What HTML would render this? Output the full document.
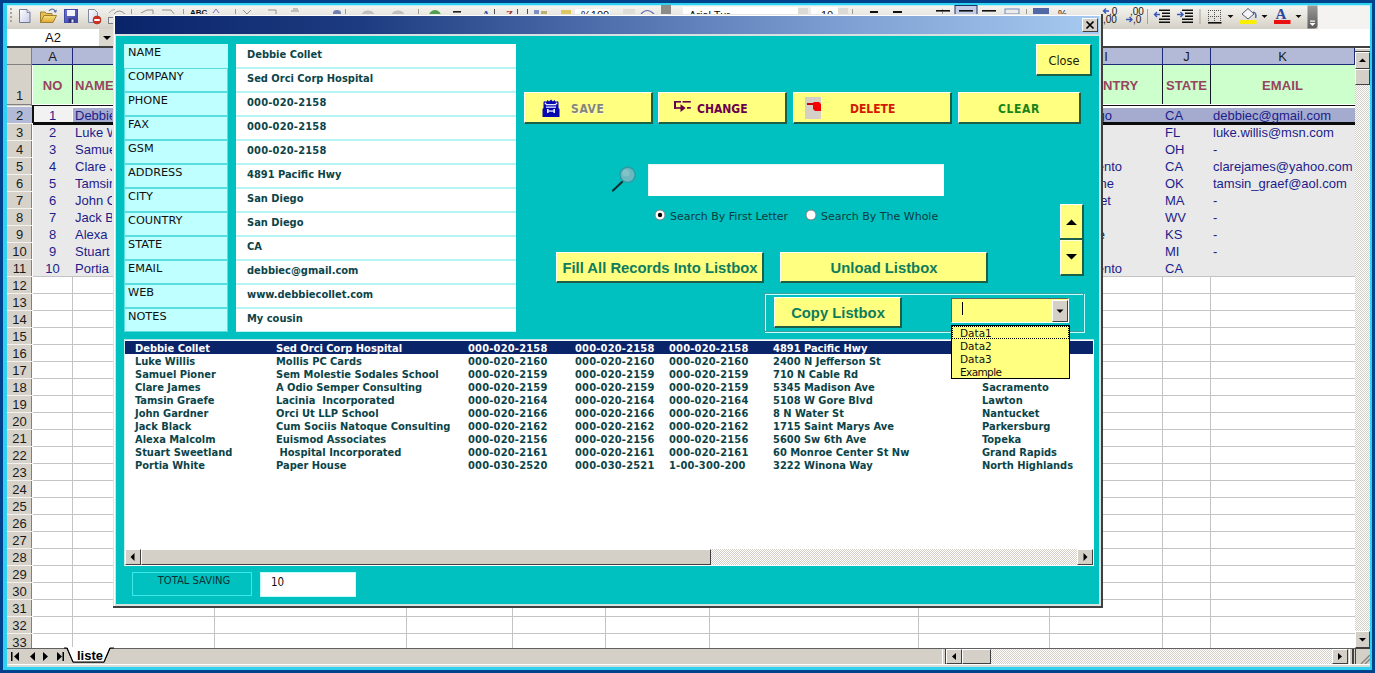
<!DOCTYPE html><html><head><meta charset="utf-8"><title>Address Book UserForm</title><style>
html,body{margin:0;padding:0;}
body{width:1375px;height:673px;overflow:hidden;position:relative;background:#00438c;font-family:"Liberation Sans",sans-serif;}
div,span,svg{position:absolute;box-sizing:border-box;}
.t{white-space:nowrap;line-height:1;}
.ar{font-family:"Liberation Sans",sans-serif;}
.th{font-family:"DejaVu Sans","Liberation Sans",sans-serif;}
.thb{font-family:"DejaVu Sans Condensed","DejaVu Sans","Liberation Sans",sans-serif;font-stretch:condensed;font-weight:bold;}
.cell{font-size:13px;color:#1c1c8a;white-space:nowrap;line-height:17px;height:17px;}
.rh{font-size:13px;color:#1a1a1a;text-align:center;left:7px;width:25px;line-height:17px;height:17px;white-space:nowrap;}
.btn{background:#ffff80;border-top:1px solid #ffffff;border-left:1px solid #ffffff;border-right:2px solid #1a6048;border-bottom:2px solid #1a6048;}
.lbl{left:124px;width:104px;height:24px;background:#c0ffff;border:1px solid #58e0e0;}
.lblt{left:128px;font-size:11.3px;color:#101010;}
.inp{left:236px;width:280px;height:24px;background:#ffffff;border:1px solid #b8f4f4;}
.inpt{left:247px;font-size:11px;color:#0b4448;}
.lb{font-size:11px;color:#0b4448;line-height:15px;height:13px;white-space:nowrap;}
</style></head><body>
<div style="left:3px;top:3px;width:1369px;height:667px;background:#30d0f0;"></div>
<div style="left:7px;top:5px;width:1363px;height:662px;background:#ffffff;"></div>
<div style="left:7px;top:5px;width:1363px;height:24px;background:linear-gradient(#f5f4f0,#e8e6df 45%,#d3cfc5);"></div>
<div style="left:1318px;top:5px;width:52px;height:24px;background:#f5f3f1;"></div>
<div style="left:7px;top:5px;width:1363px;height:1px;background:#b8f0f8;"></div>
<div style="left:7px;top:29px;width:1363px;height:17px;background:#ffffff;"></div>
<div style="left:99px;top:29px;width:15px;height:17px;background:#dcd8d0;"></div>
<div style="left:7px;top:46px;width:1363px;height:2px;background:#404040;"></div>
<svg width="110" height="24" style="left:7px;top:5px" shape-rendering="auto"><defs><linearGradient id="gdoc" x1="0" y1="0" x2="1" y2="1"><stop offset="0" stop-color="#ffffff"/><stop offset="1" stop-color="#c8cce8"/></linearGradient><linearGradient id="gfold" x1="0" y1="0" x2="0" y2="1"><stop offset="0" stop-color="#f8e080"/><stop offset="1" stop-color="#e0a830"/></linearGradient><linearGradient id="gsave" x1="0" y1="0" x2="1" y2="1"><stop offset="0" stop-color="#7078d0"/><stop offset="1" stop-color="#3840a0"/></linearGradient></defs><g fill="#a8a498"><rect x="3" y="3" width="2" height="2"/><rect x="3" y="7" width="2" height="2"/><rect x="3" y="11" width="2" height="2"/><rect x="3" y="15" width="2" height="2"/></g><path d="M12.5 4.5 L20 4.5 L23 7.5 L23 17.5 L12.5 17.5 Z" fill="url(#gdoc)" stroke="#707898" stroke-width="1"/><path d="M20 4.5 L20 7.5 L23 7.5" fill="#e8e8f4" stroke="#707898" stroke-width="0.8"/><path d="M33.5 17.5 L33.5 7 L38 7 L39.5 8.5 L45 8.5 L45 11" fill="#e8c050" stroke="#a08030" stroke-width="1"/><path d="M33.5 17.5 L37 10.5 L49.5 10.5 L46 17.5 Z" fill="url(#gfold)" stroke="#a08030" stroke-width="1"/><path d="M42 6 C44 3.5 47 3.5 48.5 6.5" fill="none" stroke="#6078a8" stroke-width="1.2"/><path d="M50 4.5 L49 8 L46.5 6.5 Z" fill="#6078a8"/><rect x="57.5" y="4.5" width="13" height="13" fill="url(#gsave)" stroke="#4048a8" stroke-width="1"/><rect x="60" y="5" width="8" height="6" fill="#f4f4fc"/><rect x="61.5" y="13.5" width="6" height="4" fill="#30307a"/><rect x="64.5" y="14.5" width="2" height="3" fill="#e8e8f8"/><path d="M81.500 4.500 L87.5 4.500 L90.5 7.5 L90.5 17.5 L81.5 17.5 Z" fill="url(#gdoc)" stroke="#8088a0" stroke-width="1"/><circle cx="90" cy="15" r="4" fill="#d03020" stroke="#a02818" stroke-width="0.6"/><rect x="87.3" y="14" width="5.4" height="2" fill="#ffffff"/><rect x="101.5" y="12.5" width="6" height="6" fill="#e8e8e8" stroke="#808080" stroke-width="1"/><path d="M102 8 Q104 4.5 108 4.5" fill="none" stroke="#b0b0b0" stroke-width="1"/></svg>
<svg width="990" height="9" style="left:113px;top:5px"><g stroke="#a09c90" stroke-width="1"><path d="M18.5 4 V9 M70.500 4 V9 M122.5 4 V9 M232.5 4 V9 M305.500 4 V9 M739.500 4 V9 M829.5 4 V9 M913.5 4 V9"/></g><g fill="none" stroke="#909090" stroke-width="1"><path d="M1 9 Q6 3 12 9"/><path d="M28 8 L34 5 L40 5 L40 9"/><path d="M49 5 L58 5 L61 9"/><path d="M130 5 L134 9 L138 5"/><path d="M155 5 H163 V9"/><path d="M178 6 H186 M180 4 H185"/></g><ellipse cx="224" cy="8" rx="4" ry="3" fill="#7080b0"/><ellipse cx="255" cy="9" rx="6" ry="3.500" fill="#c0c0c0"/><ellipse cx="285" cy="9" rx="6" ry="3.500" fill="#c0c0c0"/><circle cx="322" cy="11" r="6" fill="#50a050"/><rect x="340" y="6" width="8" height="1.600" fill="#202020"/><text x="945" y="13" font-family="Liberation Sans, sans-serif" font-size="10" fill="#202020">%</text><rect x="462" y="4" width="35" height="5" fill="#ffffff"/><rect x="510" y="4" width="12" height="5" fill="#dedcd6"/><path d="M528 9 Q534 2 541 9" fill="none" stroke="#6070b0" stroke-width="1.2"/><rect x="548" y="0" width="10" height="9" fill="#8c8c8a"/><rect x="570" y="2" width="115" height="7" fill="#ffffff"/><rect x="685" y="3" width="10" height="6" fill="#dcdad4"/><rect x="698" y="2" width="27" height="7" fill="#ffffff"/><rect x="725" y="3" width="10" height="6" fill="#dcdad4"/><rect x="842" y="0.500" width="22" height="9" fill="#c2cce6" stroke="#20306a" stroke-width="1"/><g fill="#101010"><rect x="823" y="5" width="14" height="1.600"/><rect x="846" y="5" width="14" height="1.600"/><rect x="869" y="5" width="14" height="1.600"/><rect x="757" y="6" width="8" height="2"/><rect x="780" y="6" width="9" height="2"/></g><rect x="892" y="4" width="14" height="5" fill="none" stroke="#7088c0" stroke-width="1"/><rect x="920" y="3" width="16" height="6" fill="#5068a8"/><text x="77" y="9.500" font-family="Liberation Sans, sans-serif" font-size="8" font-weight="bold" fill="#101010">ABC</text><path d="M100 8 L103 4 L106 8" fill="none" stroke="#8070c0" stroke-width="1"/><text x="369" y="13" font-family="Liberation Serif, serif" font-size="11" font-weight="bold" fill="#3050a0">A</text><text x="393" y="13" font-family="Liberation Serif, serif" font-size="11" font-weight="bold" fill="#a03030">Z</text><rect x="421" y="5" width="5" height="4" fill="#8090c0"/><rect x="428" y="6" width="6" height="3" fill="#c0b070"/><rect x="448" y="5" width="10" height="4" fill="#e0c860"/><path d="M381.500 4 V9 M404.500 4 V9 M414.500 4 V9" stroke="#505050" stroke-width="1"/><text x="468" y="14" font-family="Liberation Sans, sans-serif" font-size="11" fill="#101010">%100</text><text x="576" y="14" font-family="Liberation Sans, sans-serif" font-size="11" fill="#101010">Arial Tur</text><text x="708" y="14" font-family="Liberation Sans, sans-serif" font-size="11" fill="#101010">10</text></svg>
<svg width="230" height="24" style="left:1100px;top:5px"><defs><linearGradient id="gcap" x1="0" y1="0" x2="0" y2="1"><stop offset="0" stop-color="#9a9a98"/><stop offset="1" stop-color="#5c5c5c"/></linearGradient></defs><g font-family="Liberation Sans, sans-serif" font-size="10" fill="#181818"><text x="9" y="10">,0</text><text x="3" y="18">,00</text><text x="30" y="10">,00</text><text x="33" y="18">,0</text></g><g stroke="#3858b8" stroke-width="1.400" fill="none"><path d="M3.500 6 H9 M6 3.500 L3.500 6 L6 8.500"/><path d="M26 14.500 H32 M29.500 12 L32 14.500 L29.500 17"/></g><rect x="47" y="4" width="1" height="15" fill="#a8a498"/><rect x="99.500" y="4" width="1" height="15" fill="#a8a498"/><g fill="#101010"><rect x="59" y="4.500" width="11" height="1.500"/><rect x="62" y="7.500" width="8" height="1.500"/><rect x="62" y="10.500" width="8" height="1.500"/><rect x="59" y="13.500" width="11" height="1.500"/><rect x="59" y="16.500" width="11" height="1.500"/><rect x="82" y="4.500" width="11" height="1.500"/><rect x="85" y="7.500" width="8" height="1.500"/><rect x="85" y="10.500" width="8" height="1.500"/><rect x="82" y="13.500" width="11" height="1.500"/><rect x="82" y="16.500" width="11" height="1.500"/></g><g stroke="#3858b8" stroke-width="1.400" fill="none"><path d="M54.500 9.500 H60 M57 7 L54.500 9.500 L57 12"/><path d="M77 9.500 H83 M80.500 7 L83 9.500 L80.500 12"/></g><g stroke="#505050" stroke-width="1" stroke-dasharray="1 1" fill="none"><path d="M108.500 5 V17 M114.500 5 V17 M120.500 5 V17 M108 5.500 H121 M108 11.500 H121"/></g><rect x="108" y="17" width="13.500" height="1.600" fill="#101010"/><path d="M127.500 10 H133.500 L130.500 13 Z M161.500 10 H167.500 L164.500 13 Z M195.500 10 H201.500 L198.500 13 Z" fill="#101010"/><path d="M142 9 L148 3.500 L154 9 L148 14 Z" fill="#f4f4fa" stroke="#505868" stroke-width="1"/><path d="M153 7 Q157 8 155.500 13" fill="none" stroke="#4868b8" stroke-width="1.600"/><rect x="140" y="15" width="16.500" height="4" fill="#f8f000"/><text x="175.500" y="14" font-family="Liberation Serif, serif" font-weight="bold" font-size="15" fill="#2848a0">A</text><rect x="174" y="15" width="16.500" height="4" fill="#e81010"/><path d="M207.500 0.500 H217.500 V20 Q217.500 23.500 214 23.500 H207.500 Z" fill="url(#gcap)"/><rect x="210" y="15.500" width="5" height="1.200" fill="#ffffff"/><path d="M209.500 18 H215.500 L212.500 21 Z" fill="#ffffff"/></svg>
<div class="t ar" style="left:7px;top:29px;width:92px;height:17px;font-size:13px;color:#101010;text-align:center;line-height:17px;">A2</div>
<svg width="15" height="17" style="left:99px;top:29px"><path d="M4 7 H12 L8 11 Z" fill="#000"/></svg>
<div style="left:7px;top:48px;width:1348px;height:600px;background:#ffffff;"></div>
<div style="left:7px;top:48px;width:1348px;height:17px;background:#b3bad7;border-bottom:1px solid #1c2a78;"></div>
<div style="left:7px;top:48px;width:25px;height:17px;background:#d4d0c8;border-right:1px solid #808080;border-bottom:1px solid #808080;"></div>
<div class="t" style="left:33px;top:48px;width:39px;height:16px;font-size:13px;color:#1a1a1a;text-align:center;line-height:17px;">A</div>
<div style="left:72px;top:48px;width:1px;height:17px;background:#1c2a78;"></div>
<div class="t" style="left:73px;top:48px;width:141px;height:16px;font-size:13px;color:#1a1a1a;text-align:center;line-height:17px;">B</div>
<div style="left:214px;top:48px;width:1px;height:17px;background:#1c2a78;"></div>
<div class="t" style="left:215px;top:48px;width:191px;height:16px;font-size:13px;color:#1a1a1a;text-align:center;line-height:17px;">C</div>
<div style="left:406px;top:48px;width:1px;height:17px;background:#1c2a78;"></div>
<div class="t" style="left:407px;top:48px;width:105px;height:16px;font-size:13px;color:#1a1a1a;text-align:center;line-height:17px;">D</div>
<div style="left:512px;top:48px;width:1px;height:17px;background:#1c2a78;"></div>
<div class="t" style="left:513px;top:48px;width:92px;height:16px;font-size:13px;color:#1a1a1a;text-align:center;line-height:17px;">E</div>
<div style="left:605px;top:48px;width:1px;height:17px;background:#1c2a78;"></div>
<div class="t" style="left:606px;top:48px;width:103px;height:16px;font-size:13px;color:#1a1a1a;text-align:center;line-height:17px;">F</div>
<div style="left:709px;top:48px;width:1px;height:17px;background:#1c2a78;"></div>
<div class="t" style="left:710px;top:48px;width:208px;height:16px;font-size:13px;color:#1a1a1a;text-align:center;line-height:17px;">G</div>
<div style="left:918px;top:48px;width:1px;height:17px;background:#1c2a78;"></div>
<div class="t" style="left:919px;top:48px;width:130px;height:16px;font-size:13px;color:#1a1a1a;text-align:center;line-height:17px;">H</div>
<div style="left:1049px;top:48px;width:1px;height:17px;background:#1c2a78;"></div>
<div class="t" style="left:1050px;top:48px;width:112px;height:16px;font-size:13px;color:#1a1a1a;text-align:center;line-height:17px;">I</div>
<div style="left:1162px;top:48px;width:1px;height:17px;background:#1c2a78;"></div>
<div class="t" style="left:1163px;top:48px;width:47px;height:16px;font-size:13px;color:#1a1a1a;text-align:center;line-height:17px;">J</div>
<div style="left:1210px;top:48px;width:1px;height:17px;background:#1c2a78;"></div>
<div class="t" style="left:1211px;top:48px;width:143px;height:16px;font-size:13px;color:#1a1a1a;text-align:center;line-height:17px;">K</div>
<div style="left:1354px;top:48px;width:1px;height:17px;background:#1c2a78;"></div>
<div style="left:33px;top:65px;width:1322px;height:39px;background:#ccffcc;"></div>
<div style="left:72px;top:65px;width:1px;height:39px;background:#101820;"></div>
<div style="left:214px;top:65px;width:1px;height:39px;background:#101820;"></div>
<div style="left:406px;top:65px;width:1px;height:39px;background:#101820;"></div>
<div style="left:512px;top:65px;width:1px;height:39px;background:#101820;"></div>
<div style="left:605px;top:65px;width:1px;height:39px;background:#101820;"></div>
<div style="left:709px;top:65px;width:1px;height:39px;background:#101820;"></div>
<div style="left:918px;top:65px;width:1px;height:39px;background:#101820;"></div>
<div style="left:1049px;top:65px;width:1px;height:39px;background:#101820;"></div>
<div style="left:1162px;top:65px;width:1px;height:39px;background:#101820;"></div>
<div style="left:1210px;top:65px;width:1px;height:39px;background:#101820;"></div>
<div class="t" style="left:33px;top:65px;width:39px;height:39px;font-size:13px;font-weight:bold;color:#96445f;text-align:center;line-height:41px;letter-spacing:0.1px;">NO</div>
<div class="t" style="left:75px;top:65px;width:100px;height:39px;font-size:13px;font-weight:bold;color:#96445f;line-height:41px;letter-spacing:0.1px;">NAME</div>
<div class="t" style="left:215px;top:65px;width:191px;height:39px;font-size:13px;font-weight:bold;color:#96445f;text-align:center;line-height:41px;letter-spacing:0.1px;">COMPANY</div>
<div class="t" style="left:407px;top:65px;width:105px;height:39px;font-size:13px;font-weight:bold;color:#96445f;text-align:center;line-height:41px;letter-spacing:0.1px;">PHONE</div>
<div class="t" style="left:513px;top:65px;width:92px;height:39px;font-size:13px;font-weight:bold;color:#96445f;text-align:center;line-height:41px;letter-spacing:0.1px;">FAX</div>
<div class="t" style="left:606px;top:65px;width:103px;height:39px;font-size:13px;font-weight:bold;color:#96445f;text-align:center;line-height:41px;letter-spacing:0.1px;">GSM</div>
<div class="t" style="left:710px;top:65px;width:208px;height:39px;font-size:13px;font-weight:bold;color:#96445f;text-align:center;line-height:41px;letter-spacing:0.1px;">ADDRESS</div>
<div class="t" style="left:919px;top:65px;width:130px;height:39px;font-size:13px;font-weight:bold;color:#96445f;text-align:center;line-height:41px;letter-spacing:0.1px;">CITY</div>
<div class="t" style="left:1050px;top:65px;width:112px;height:39px;font-size:13px;font-weight:bold;color:#96445f;text-align:center;line-height:41px;letter-spacing:0.1px;">COUNTRY</div>
<div class="t" style="left:1163px;top:65px;width:47px;height:39px;font-size:13px;font-weight:bold;color:#96445f;text-align:center;line-height:41px;letter-spacing:0.1px;">STATE</div>
<div class="t" style="left:1211px;top:65px;width:143px;height:39px;font-size:13px;font-weight:bold;color:#96445f;text-align:center;line-height:41px;letter-spacing:0.1px;">EMAIL</div>
<div style="left:33px;top:106px;width:1322px;height:171px;background:#e9e9e9;"></div>
<div style="left:33px;top:276px;width:1322px;height:1px;background:#c4c4c4;"></div>
<div style="left:33px;top:293px;width:1322px;height:1px;background:#c4c4c4;"></div>
<div style="left:33px;top:310px;width:1322px;height:1px;background:#c4c4c4;"></div>
<div style="left:33px;top:327px;width:1322px;height:1px;background:#c4c4c4;"></div>
<div style="left:33px;top:344px;width:1322px;height:1px;background:#c4c4c4;"></div>
<div style="left:33px;top:361px;width:1322px;height:1px;background:#c4c4c4;"></div>
<div style="left:33px;top:378px;width:1322px;height:1px;background:#c4c4c4;"></div>
<div style="left:33px;top:395px;width:1322px;height:1px;background:#c4c4c4;"></div>
<div style="left:33px;top:412px;width:1322px;height:1px;background:#c4c4c4;"></div>
<div style="left:33px;top:429px;width:1322px;height:1px;background:#c4c4c4;"></div>
<div style="left:33px;top:446px;width:1322px;height:1px;background:#c4c4c4;"></div>
<div style="left:33px;top:463px;width:1322px;height:1px;background:#c4c4c4;"></div>
<div style="left:33px;top:480px;width:1322px;height:1px;background:#c4c4c4;"></div>
<div style="left:33px;top:497px;width:1322px;height:1px;background:#c4c4c4;"></div>
<div style="left:33px;top:514px;width:1322px;height:1px;background:#c4c4c4;"></div>
<div style="left:33px;top:531px;width:1322px;height:1px;background:#c4c4c4;"></div>
<div style="left:33px;top:548px;width:1322px;height:1px;background:#c4c4c4;"></div>
<div style="left:33px;top:565px;width:1322px;height:1px;background:#c4c4c4;"></div>
<div style="left:33px;top:582px;width:1322px;height:1px;background:#c4c4c4;"></div>
<div style="left:33px;top:599px;width:1322px;height:1px;background:#c4c4c4;"></div>
<div style="left:33px;top:616px;width:1322px;height:1px;background:#c4c4c4;"></div>
<div style="left:33px;top:633px;width:1322px;height:1px;background:#c4c4c4;"></div>
<div style="left:72px;top:277px;width:1px;height:371px;background:#c4c4c4;"></div>
<div style="left:214px;top:277px;width:1px;height:371px;background:#c4c4c4;"></div>
<div style="left:406px;top:277px;width:1px;height:371px;background:#c4c4c4;"></div>
<div style="left:512px;top:277px;width:1px;height:371px;background:#c4c4c4;"></div>
<div style="left:605px;top:277px;width:1px;height:371px;background:#c4c4c4;"></div>
<div style="left:709px;top:277px;width:1px;height:371px;background:#c4c4c4;"></div>
<div style="left:918px;top:277px;width:1px;height:371px;background:#c4c4c4;"></div>
<div style="left:1049px;top:277px;width:1px;height:371px;background:#c4c4c4;"></div>
<div style="left:1162px;top:277px;width:1px;height:371px;background:#c4c4c4;"></div>
<div style="left:1210px;top:277px;width:1px;height:371px;background:#c4c4c4;"></div>
<div style="left:7px;top:65px;width:25px;height:583px;background:#d6d2ca;border-right:1px solid #808080;"></div>
<div style="left:7px;top:65px;width:25px;height:40px;border-bottom:1px solid #808080;"></div>
<div class="t" style="left:7px;top:65px;width:25px;height:39px;font-size:13px;color:#1a1a1a;text-align:center;line-height:62px;">1</div>
<div style="left:7px;top:106px;width:25px;height:18px;background:#b3bad7;border-bottom:1px solid #808080;border-top:1px solid #f4f2ee;"></div>
<div class="rh ar" style="top:107px;">2</div>
<div style="left:7px;top:123px;width:25px;height:18px;border-bottom:1px solid #808080;border-top:1px solid #f4f2ee;"></div>
<div class="rh ar" style="top:124px;">3</div>
<div style="left:7px;top:140px;width:25px;height:18px;border-bottom:1px solid #808080;border-top:1px solid #f4f2ee;"></div>
<div class="rh ar" style="top:141px;">4</div>
<div style="left:7px;top:157px;width:25px;height:18px;border-bottom:1px solid #808080;border-top:1px solid #f4f2ee;"></div>
<div class="rh ar" style="top:158px;">5</div>
<div style="left:7px;top:174px;width:25px;height:18px;border-bottom:1px solid #808080;border-top:1px solid #f4f2ee;"></div>
<div class="rh ar" style="top:175px;">6</div>
<div style="left:7px;top:191px;width:25px;height:18px;border-bottom:1px solid #808080;border-top:1px solid #f4f2ee;"></div>
<div class="rh ar" style="top:192px;">7</div>
<div style="left:7px;top:208px;width:25px;height:18px;border-bottom:1px solid #808080;border-top:1px solid #f4f2ee;"></div>
<div class="rh ar" style="top:209px;">8</div>
<div style="left:7px;top:225px;width:25px;height:18px;border-bottom:1px solid #808080;border-top:1px solid #f4f2ee;"></div>
<div class="rh ar" style="top:226px;">9</div>
<div style="left:7px;top:242px;width:25px;height:18px;border-bottom:1px solid #808080;border-top:1px solid #f4f2ee;"></div>
<div class="rh ar" style="top:243px;">10</div>
<div style="left:7px;top:259px;width:25px;height:18px;border-bottom:1px solid #808080;border-top:1px solid #f4f2ee;"></div>
<div class="rh ar" style="top:260px;">11</div>
<div style="left:7px;top:276px;width:25px;height:18px;border-bottom:1px solid #808080;border-top:1px solid #f4f2ee;"></div>
<div class="rh ar" style="top:277px;">12</div>
<div style="left:7px;top:293px;width:25px;height:18px;border-bottom:1px solid #808080;border-top:1px solid #f4f2ee;"></div>
<div class="rh ar" style="top:294px;">13</div>
<div style="left:7px;top:310px;width:25px;height:18px;border-bottom:1px solid #808080;border-top:1px solid #f4f2ee;"></div>
<div class="rh ar" style="top:311px;">14</div>
<div style="left:7px;top:327px;width:25px;height:18px;border-bottom:1px solid #808080;border-top:1px solid #f4f2ee;"></div>
<div class="rh ar" style="top:328px;">15</div>
<div style="left:7px;top:344px;width:25px;height:18px;border-bottom:1px solid #808080;border-top:1px solid #f4f2ee;"></div>
<div class="rh ar" style="top:345px;">16</div>
<div style="left:7px;top:361px;width:25px;height:18px;border-bottom:1px solid #808080;border-top:1px solid #f4f2ee;"></div>
<div class="rh ar" style="top:362px;">17</div>
<div style="left:7px;top:378px;width:25px;height:18px;border-bottom:1px solid #808080;border-top:1px solid #f4f2ee;"></div>
<div class="rh ar" style="top:379px;">18</div>
<div style="left:7px;top:395px;width:25px;height:18px;border-bottom:1px solid #808080;border-top:1px solid #f4f2ee;"></div>
<div class="rh ar" style="top:396px;">19</div>
<div style="left:7px;top:412px;width:25px;height:18px;border-bottom:1px solid #808080;border-top:1px solid #f4f2ee;"></div>
<div class="rh ar" style="top:413px;">20</div>
<div style="left:7px;top:429px;width:25px;height:18px;border-bottom:1px solid #808080;border-top:1px solid #f4f2ee;"></div>
<div class="rh ar" style="top:430px;">21</div>
<div style="left:7px;top:446px;width:25px;height:18px;border-bottom:1px solid #808080;border-top:1px solid #f4f2ee;"></div>
<div class="rh ar" style="top:447px;">22</div>
<div style="left:7px;top:463px;width:25px;height:18px;border-bottom:1px solid #808080;border-top:1px solid #f4f2ee;"></div>
<div class="rh ar" style="top:464px;">23</div>
<div style="left:7px;top:480px;width:25px;height:18px;border-bottom:1px solid #808080;border-top:1px solid #f4f2ee;"></div>
<div class="rh ar" style="top:481px;">24</div>
<div style="left:7px;top:497px;width:25px;height:18px;border-bottom:1px solid #808080;border-top:1px solid #f4f2ee;"></div>
<div class="rh ar" style="top:498px;">25</div>
<div style="left:7px;top:514px;width:25px;height:18px;border-bottom:1px solid #808080;border-top:1px solid #f4f2ee;"></div>
<div class="rh ar" style="top:515px;">26</div>
<div style="left:7px;top:531px;width:25px;height:18px;border-bottom:1px solid #808080;border-top:1px solid #f4f2ee;"></div>
<div class="rh ar" style="top:532px;">27</div>
<div style="left:7px;top:548px;width:25px;height:18px;border-bottom:1px solid #808080;border-top:1px solid #f4f2ee;"></div>
<div class="rh ar" style="top:549px;">28</div>
<div style="left:7px;top:565px;width:25px;height:18px;border-bottom:1px solid #808080;border-top:1px solid #f4f2ee;"></div>
<div class="rh ar" style="top:566px;">29</div>
<div style="left:7px;top:582px;width:25px;height:18px;border-bottom:1px solid #808080;border-top:1px solid #f4f2ee;"></div>
<div class="rh ar" style="top:583px;">30</div>
<div style="left:7px;top:599px;width:25px;height:18px;border-bottom:1px solid #808080;border-top:1px solid #f4f2ee;"></div>
<div class="rh ar" style="top:600px;">31</div>
<div style="left:7px;top:616px;width:25px;height:18px;border-bottom:1px solid #808080;border-top:1px solid #f4f2ee;"></div>
<div class="rh ar" style="top:617px;">32</div>
<div style="left:7px;top:633px;width:25px;height:18px;border-bottom:1px solid #808080;border-top:1px solid #f4f2ee;"></div>
<div class="rh ar" style="top:634px;">33</div>
<div style="left:33px;top:104px;width:1322px;height:2px;background:#ffffff;"></div>
<div style="left:33px;top:105px;width:1322px;height:1px;background:#101010;"></div>
<div style="left:33px;top:106px;width:1322px;height:16px;background:#ffffff;"></div>
<div style="left:73px;top:108px;width:1282px;height:14px;background:#a4abce;"></div>
<div style="left:33px;top:106px;width:39px;height:16px;background:#f2f2f2;"></div>
<div style="left:32px;top:105px;width:2px;height:18px;background:#101010;"></div>
<div style="left:33px;top:122px;width:1322px;height:3px;background:#0a0a0a;"></div>
<div class="cell ar" style="left:33px;width:39px;text-align:center;top:107px;">1</div>
<div class="cell ar" style="left:75px;top:107px;width:37px;overflow:hidden;">Debbie Collet</div>
<div class="cell ar" style="right:263px;top:107px;">San Diego</div>
<div class="cell ar" style="left:1165px;top:107px;">CA</div>
<div class="cell ar" style="left:1213px;top:107px;">debbiec@gmail.com</div>
<div class="cell ar" style="left:33px;width:39px;text-align:center;top:124px;">2</div>
<div class="cell ar" style="left:75px;top:124px;width:37px;overflow:hidden;">Luke Willis</div>
<div class="cell ar" style="left:1165px;top:124px;">FL</div>
<div class="cell ar" style="left:1213px;top:124px;">luke.willis@msn.com</div>
<div class="cell ar" style="left:33px;width:39px;text-align:center;top:141px;">3</div>
<div class="cell ar" style="left:75px;top:141px;width:37px;overflow:hidden;">Samuel Pioner</div>
<div class="cell ar" style="left:1165px;top:141px;">OH</div>
<div class="cell ar" style="left:1213px;top:141px;">-</div>
<div class="cell ar" style="left:33px;width:39px;text-align:center;top:158px;">4</div>
<div class="cell ar" style="left:75px;top:158px;width:37px;overflow:hidden;">Clare James</div>
<div class="cell ar" style="right:253px;top:158px;">Sacramento</div>
<div class="cell ar" style="left:1165px;top:158px;">CA</div>
<div class="cell ar" style="left:1213px;top:158px;">clarejames@yahoo.com</div>
<div class="cell ar" style="left:33px;width:39px;text-align:center;top:175px;">5</div>
<div class="cell ar" style="left:75px;top:175px;width:37px;overflow:hidden;">Tamsin Graefe</div>
<div class="cell ar" style="right:261px;top:175px;">Cheyenne</div>
<div class="cell ar" style="left:1165px;top:175px;">OK</div>
<div class="cell ar" style="left:1213px;top:175px;">tamsin_graef@aol.com</div>
<div class="cell ar" style="left:33px;width:39px;text-align:center;top:192px;">6</div>
<div class="cell ar" style="left:75px;top:192px;width:37px;overflow:hidden;">John Gardner</div>
<div class="cell ar" style="right:264px;top:192px;">Nantucket</div>
<div class="cell ar" style="left:1165px;top:192px;">MA</div>
<div class="cell ar" style="left:1213px;top:192px;">-</div>
<div class="cell ar" style="left:33px;width:39px;text-align:center;top:209px;">7</div>
<div class="cell ar" style="left:75px;top:209px;width:37px;overflow:hidden;">Jack Black</div>
<div class="cell ar" style="left:1165px;top:209px;">WV</div>
<div class="cell ar" style="left:1213px;top:209px;">-</div>
<div class="cell ar" style="left:33px;width:39px;text-align:center;top:226px;">8</div>
<div class="cell ar" style="left:75px;top:226px;width:37px;overflow:hidden;">Alexa Malcolm</div>
<div class="cell ar" style="right:270px;top:226px;">Louisville</div>
<div class="cell ar" style="left:1165px;top:226px;">KS</div>
<div class="cell ar" style="left:1213px;top:226px;">-</div>
<div class="cell ar" style="left:33px;width:39px;text-align:center;top:243px;">9</div>
<div class="cell ar" style="left:75px;top:243px;width:37px;overflow:hidden;">Stuart Sweetland</div>
<div class="cell ar" style="left:1165px;top:243px;">MI</div>
<div class="cell ar" style="left:1213px;top:243px;">-</div>
<div class="cell ar" style="left:33px;width:39px;text-align:center;top:260px;">10</div>
<div class="cell ar" style="left:75px;top:260px;width:37px;overflow:hidden;">Portia White</div>
<div class="cell ar" style="right:253px;top:260px;">Sacramento</div>
<div class="cell ar" style="left:1165px;top:260px;">CA</div>
<div style="left:1355px;top:48px;width:15px;height:600px;background-color:#ffffff;background-image:linear-gradient(45deg,#d4d0c8 25%,transparent 25%,transparent 75%,#d4d0c8 75%),linear-gradient(45deg,#d4d0c8 25%,transparent 25%,transparent 75%,#d4d0c8 75%);background-size:2px 2px;background-position:0 0,1px 1px;"></div>
<div style="left:1355px;top:48px;width:15px;height:4px;background:#d4d0c8;border-bottom:1px solid #404040;border-top:1px solid #fff;"></div>
<div style="left:1355px;top:52px;width:15px;height:17px;background:#d4d0c8;border-top:1px solid #ffffff;border-left:1px solid #ffffff;border-right:1px solid #404040;border-bottom:1px solid #404040;"><svg width="13" height="15" style="left:0;top:0"><path d="M3 9 L10 9 L6.5 5.5 Z" fill="#000"/></svg></div>
<div style="left:1355px;top:69px;width:15px;height:16px;background:#d4d0c8;border-top:1px solid #ffffff;border-left:1px solid #ffffff;border-right:1px solid #404040;border-bottom:1px solid #404040;"></div>
<div style="left:1355px;top:631px;width:15px;height:17px;background:#d4d0c8;border-top:1px solid #ffffff;border-left:1px solid #ffffff;border-right:1px solid #404040;border-bottom:1px solid #404040;"><svg width="13" height="15" style="left:0;top:0"><path d="M3 6 L10 6 L6.5 9.5 Z" fill="#000"/></svg></div>
<div style="left:7px;top:648px;width:1363px;height:16px;background:#d4d0c8;border-top:1px solid #606060;"></div>
<div style="left:7px;top:664px;width:1363px;height:1px;background:#ffffff;"></div>
<div style="left:7px;top:665px;width:1363px;height:2px;background:#d4dcd8;"></div>
<svg width="62" height="16" style="left:7px;top:648px"><g fill="#000"><rect x="4" y="4" width="1.5" height="9"/><path d="M12 4 L12 13 L7 8.5Z"/><path d="M28 4 L28 13 L23 8.5Z"/><path d="M36 4 L36 13 L41 8.5Z"/><path d="M50 4 L50 13 L55 8.5Z"/><rect x="55.5" y="4" width="1.5" height="9"/></g></svg>
<svg width="50" height="17" style="left:64px;top:647px"><path d="M0 1 L3 1 L9 15 L40 15 L46 1 L50 1" fill="none" stroke="#000" stroke-width="1"/><path d="M3 0 L9 15 L40 15 L46 0 Z" fill="#ffffff"/><path d="M3 1 L9 15 L40 15 L46 1" fill="none" stroke="#000" stroke-width="1.2"/></svg>
<div class="t ar" style="left:74px;top:648px;width:32px;height:15px;font-size:13px;font-weight:bold;color:#000;text-align:center;line-height:15px;">liste</div>
<div style="left:942px;top:649px;width:4px;height:15px;background:#d4d0c8;border-left:1px solid #fff;border-right:1px solid #404040;"></div>
<div style="left:946px;top:649px;width:402px;height:15px;background-color:#ffffff;background-image:linear-gradient(45deg,#d4d0c8 25%,transparent 25%,transparent 75%,#d4d0c8 75%),linear-gradient(45deg,#d4d0c8 25%,transparent 25%,transparent 75%,#d4d0c8 75%);background-size:2px 2px;background-position:0 0,1px 1px;"></div>
<div style="left:946px;top:649px;width:16px;height:15px;background:#d4d0c8;border-top:1px solid #ffffff;border-left:1px solid #ffffff;border-right:1px solid #404040;border-bottom:1px solid #404040;"><svg width="14" height="13" style="left:0;top:0"><path d="M9 3 L9 10 L5 6.5 Z" fill="#000"/></svg></div>
<div style="left:962px;top:649px;width:29px;height:15px;background:#d4d0c8;border-top:1px solid #ffffff;border-left:1px solid #ffffff;border-right:1px solid #404040;border-bottom:1px solid #404040;"></div>
<div style="left:1332px;top:649px;width:16px;height:15px;background:#d4d0c8;border-top:1px solid #ffffff;border-left:1px solid #ffffff;border-right:1px solid #404040;border-bottom:1px solid #404040;"><svg width="14" height="13" style="left:0;top:0"><path d="M5 3 L5 10 L9 6.5 Z" fill="#000"/></svg></div>
<div style="left:1349px;top:649px;width:5px;height:15px;background:#d4d0c8;border-left:1px solid #fff;border-right:2px solid #404040;"></div>
<div style="left:1355px;top:648px;width:15px;height:16px;background:#d4d0c8;border-top:1px solid #404040;border-left:1px solid #404040;"><svg width="14" height="15" style="left:0;top:0"><path d="M5 15 L14 6 M9 15 L14 10" stroke="#808080" stroke-width="1.3"/></svg></div>
<div style="left:113px;top:14px;width:990px;height:594px;background:#e6e6e4;border-right:2px solid #404040;border-bottom:2px solid #404040;"></div>
<div style="left:114px;top:15px;width:987px;height:591px;background:#d6e2e0;border-top:1px solid #ffffff;border-left:1px solid #ffffff;"></div>
<div style="left:115px;top:16px;width:984px;height:18px;background:linear-gradient(90deg,#0a246a 0%,#1d3b80 25%,#4f6fad 50%,#7fa1d4 75%,#a6caf0 100%);"></div>
<div style="left:1082px;top:18px;width:16px;height:14px;background:#d4d0c8;border-top:1px solid #fff;border-left:1px solid #fff;border-right:1px solid #404040;border-bottom:1px solid #404040;"><svg width="14" height="12" style="left:0;top:0"><path d="M3.500 2.500 L10.500 9.500 M10.500 2.500 L3.500 9.500" stroke="#000" stroke-width="1.700"/></svg></div>
<div style="left:116px;top:36px;width:983px;height:568px;background:#00c0c0;"></div>
<div style="left:124px;top:44px;width:104px;height:288px;background:#58e0e0;"></div>
<div style="left:236px;top:44px;width:280px;height:288px;background:#b8f4f4;"></div>
<div style="left:124px;top:44px;width:104px;height:24px;background:#c0ffff;"></div>
<div style="left:236px;top:44px;width:280px;height:23px;background:#ffffff;"></div>
<div class="t th lblt" style="top:47px;">NAME</div>
<div class="t thb inpt" style="top:49px;">Debbie Collet</div>
<div style="left:125px;top:69px;width:102px;height:22px;background:#c0ffff;"></div>
<div style="left:236px;top:69px;width:280px;height:22px;background:#ffffff;"></div>
<div class="t th lblt" style="top:71px;">COMPANY</div>
<div class="t thb inpt" style="top:73px;">Sed Orci Corp Hospital</div>
<div style="left:125px;top:93px;width:102px;height:22px;background:#c0ffff;"></div>
<div style="left:236px;top:93px;width:280px;height:22px;background:#ffffff;"></div>
<div class="t th lblt" style="top:95px;">PHONE</div>
<div class="t thb inpt" style="top:97px;letter-spacing:0.2px;">000-020-2158</div>
<div style="left:125px;top:117px;width:102px;height:22px;background:#c0ffff;"></div>
<div style="left:236px;top:117px;width:280px;height:22px;background:#ffffff;"></div>
<div class="t th lblt" style="top:119px;">FAX</div>
<div class="t thb inpt" style="top:121px;letter-spacing:0.2px;">000-020-2158</div>
<div style="left:125px;top:141px;width:102px;height:22px;background:#c0ffff;"></div>
<div style="left:236px;top:141px;width:280px;height:22px;background:#ffffff;"></div>
<div class="t th lblt" style="top:143px;">GSM</div>
<div class="t thb inpt" style="top:145px;letter-spacing:0.2px;">000-020-2158</div>
<div style="left:125px;top:165px;width:102px;height:22px;background:#c0ffff;"></div>
<div style="left:236px;top:165px;width:280px;height:22px;background:#ffffff;"></div>
<div class="t th lblt" style="top:167px;">ADDRESS</div>
<div class="t thb inpt" style="top:169px;">4891 Pacific Hwy</div>
<div style="left:125px;top:189px;width:102px;height:22px;background:#c0ffff;"></div>
<div style="left:236px;top:189px;width:280px;height:22px;background:#ffffff;"></div>
<div class="t th lblt" style="top:191px;">CITY</div>
<div class="t thb inpt" style="top:193px;">San Diego</div>
<div style="left:125px;top:213px;width:102px;height:22px;background:#c0ffff;"></div>
<div style="left:236px;top:213px;width:280px;height:22px;background:#ffffff;"></div>
<div class="t th lblt" style="top:215px;">COUNTRY</div>
<div class="t thb inpt" style="top:217px;">San Diego</div>
<div style="left:125px;top:237px;width:102px;height:22px;background:#c0ffff;"></div>
<div style="left:236px;top:237px;width:280px;height:22px;background:#ffffff;"></div>
<div class="t th lblt" style="top:239px;">STATE</div>
<div class="t thb inpt" style="top:241px;">CA</div>
<div style="left:125px;top:261px;width:102px;height:22px;background:#c0ffff;"></div>
<div style="left:236px;top:261px;width:280px;height:22px;background:#ffffff;"></div>
<div class="t th lblt" style="top:263px;">EMAIL</div>
<div class="t thb inpt" style="top:265px;">debbiec@gmail.com</div>
<div style="left:125px;top:285px;width:102px;height:22px;background:#c0ffff;"></div>
<div style="left:236px;top:285px;width:280px;height:22px;background:#ffffff;"></div>
<div class="t th lblt" style="top:287px;">WEB</div>
<div class="t thb inpt" style="top:289px;">www.debbiecollet.com</div>
<div style="left:125px;top:309px;width:102px;height:22px;background:#c0ffff;"></div>
<div style="left:236px;top:309px;width:280px;height:22px;background:#ffffff;"></div>
<div class="t th lblt" style="top:311px;">NOTES</div>
<div class="t thb inpt" style="top:313px;">My cousin</div>
<div class="btn" style="left:1036px;top:44px;width:56px;height:32px;"></div>
<div class="t th" style="left:1036px;top:44px;width:56px;height:32px;font-size:11.4px;color:#202008;text-align:center;line-height:35px;">Close</div>
<div class="btn" style="left:524px;top:92px;width:129px;height:32px;"></div>
<div class="btn" style="left:658px;top:92px;width:129px;height:32px;"></div>
<div class="btn" style="left:793px;top:92px;width:159px;height:32px;"></div>
<div class="btn" style="left:958px;top:92px;width:123px;height:32px;"></div>
<div class="t thb" style="left:571px;top:103px;font-size:12px;color:#848478;letter-spacing:0.6px;text-shadow:1px 1px 0 #ffffd8;">SAVE</div>
<div class="t thb" style="left:697px;top:103px;font-size:12px;color:#6a0050;">CHANGE</div>
<div class="t thb" style="left:850px;top:103px;font-size:12px;color:#d41800;">DELETE</div>
<div class="t thb" style="left:998px;top:103px;font-size:12px;color:#188418;letter-spacing:0.6px;">CLEAR</div>
<svg width="20" height="20" style="left:541px;top:98px"><path d="M1.500 19 V11 L2.500 10 V4 L4 3 L5 4 L6.500 2 L8 3.500 L10 1.500 L12 3.500 L13.500 2 L15 4 L16 3 L17.500 4 V10 L18.500 11 V19 Z" fill="#0808b0"/><g fill="#e8ecff"><rect x="5" y="6" width="10" height="1.300"/><rect x="5" y="8.500" width="10" height="1.300"/><rect x="6" y="11" width="1.600" height="4"/><rect x="12.400" y="11" width="1.600" height="4"/><rect x="6" y="12.400" width="8" height="1.300"/><circle cx="4.500" cy="5.500" r="0.900"/><circle cx="15.500" cy="5.500" r="0.900"/></g></svg>
<svg width="20" height="14" style="left:673px;top:100px"><g fill="#640048"><rect x="1" y="1" width="7" height="1.600"/><rect x="9.500" y="1" width="8.300" height="1.600"/><rect x="1" y="1" width="2" height="7.800"/><rect x="1" y="7.200" width="7" height="1.600"/><path d="M7.500 4.300 L12.700 8 L7.500 12 Z"/><rect x="14" y="7" width="3.800" height="1.700"/></g></svg>
<div style="left:805px;top:97px;width:16px;height:22px;background:#d4d0c8;"></div>
<svg width="16" height="22" style="left:805px;top:97px"><path d="M2 6 L8 6 L9 5 L14 5 L16 7 L16 14 L10 14 L8 12 L8 8 L2 8 Z" fill="#f80000"/><path d="M2 7 H8" stroke="#a00000" stroke-width="1"/></svg>
<svg width="28" height="28" style="left:610px;top:164px"><path d="M12.500 17.500 L3 26.500" stroke="#0c3030" stroke-width="2.200" stroke-linecap="round"/><circle cx="17.600" cy="10.800" r="7.600" fill="#6cb8c0" stroke="#2c9ca4" stroke-width="1.400"/><circle cx="16" cy="9" r="3.500" fill="#8cc8cc" opacity="0.700"/></svg>
<div style="left:648px;top:164px;width:296px;height:32px;background:#ffffff;border-top:1px solid #e8f4f4;border-left:1px solid #e8f4f4;"></div>
<svg width="12" height="12" style="left:654px;top:209px"><circle cx="6" cy="6" r="5" fill="#fff" stroke="#808080" stroke-width="1"/><circle cx="6" cy="6" r="2.2" fill="#000"/></svg>
<div class="t th" style="left:670px;top:211px;font-size:11px;color:#0b3c40;">Search By First Letter</div>
<svg width="12" height="12" style="left:805px;top:209px"><circle cx="6" cy="6" r="5" fill="#fff" stroke="#808080" stroke-width="1"/></svg>
<div class="t th" style="left:821px;top:211px;font-size:11px;color:#0b3c40;">Search By The Whole</div>
<div class="btn" style="left:1060px;top:204px;width:24px;height:72px;"></div>
<div style="left:1060px;top:238px;width:22px;height:2px;background:#1a6048;"></div>
<div style="left:1060px;top:240px;width:22px;height:1px;background:#ffffe0;"></div>
<svg width="24" height="72" style="left:1060px;top:204px"><path d="M6 21 L17 21 L11.5 15.5 Z M6 50 L17 50 L11.5 55.5 Z" fill="#000"/></svg>
<div class="btn" style="left:556px;top:252px;width:208px;height:31px;"></div>
<div class="btn" style="left:780px;top:252px;width:208px;height:31px;"></div>
<div class="t ar" style="left:556px;top:252px;width:208px;height:31px;font-size:14.8px;font-weight:bold;color:#0e7c5c;text-align:center;line-height:33px;">Fill All Records Into Listbox</div>
<div class="t ar" style="left:780px;top:252px;width:208px;height:31px;font-size:14.8px;font-weight:bold;color:#0e7c5c;text-align:center;line-height:33px;">Unload Listbox</div>
<div style="left:764px;top:293px;width:320px;height:39px;border:1px solid #40a0a0;box-shadow:inset 1px 1px 0 #c0ffff, 1px 1px 0 #c0ffff;"></div>
<div class="btn" style="left:774px;top:297px;width:128px;height:31px;"></div>
<div class="t ar" style="left:774px;top:297px;width:128px;height:31px;font-size:14.8px;font-weight:bold;color:#0e7c5c;text-align:center;line-height:33px;">Copy Listbox</div>
<div style="left:951px;top:298px;width:118px;height:25px;background:#ffff80;border-top:1px solid #606060;border-left:1px solid #606060;border-right:1px solid #fff;border-bottom:1px solid #fff;"></div>
<div style="left:1052px;top:300px;width:16px;height:22px;background:#d4d0c8;border-top:1px solid #fff;border-left:1px solid #fff;border-right:1px solid #404040;border-bottom:1px solid #404040;"><svg width="14" height="20" style="left:0;top:0"><path d="M3.5 8.5 L10.5 8.5 L7 12 Z" fill="#000"/></svg></div>
<div style="left:962px;top:302px;width:1px;height:13px;background:#000;"></div>
<div style="left:124px;top:339px;width:970px;height:227px;background:#ffffff;border-top:1px solid #b4e4e8;border-left:1px solid #c8ecec;"></div>
<div style="left:125px;top:341px;width:968px;height:13px;background:#0a246a;"></div>
<div class="lb thb" style="left:135px;top:341px;color:#ffffff;">Debbie Collet</div>
<div class="lb thb" style="left:276px;top:341px;color:#ffffff;">Sed Orci Corp Hospital</div>
<div class="lb thb" style="left:468px;top:341px;color:#ffffff;letter-spacing:0.2px;">000-020-2158</div>
<div class="lb thb" style="left:575px;top:341px;color:#ffffff;letter-spacing:0.2px;">000-020-2158</div>
<div class="lb thb" style="left:669px;top:341px;color:#ffffff;letter-spacing:0.2px;">000-020-2158</div>
<div class="lb thb" style="left:773px;top:341px;color:#ffffff;">4891 Pacific Hwy</div>
<div class="lb thb" style="left:982px;top:341px;color:#ffffff;">San Diego</div>
<div class="lb thb" style="left:135px;top:354px;">Luke Willis</div>
<div class="lb thb" style="left:276px;top:354px;">Mollis PC Cards</div>
<div class="lb thb" style="left:468px;top:354px;letter-spacing:0.2px;">000-020-2160</div>
<div class="lb thb" style="left:575px;top:354px;letter-spacing:0.2px;">000-020-2160</div>
<div class="lb thb" style="left:669px;top:354px;letter-spacing:0.2px;">000-020-2160</div>
<div class="lb thb" style="left:773px;top:354px;">2400 N Jefferson St</div>
<div class="lb thb" style="left:982px;top:354px;">Miami</div>
<div class="lb thb" style="left:135px;top:367px;">Samuel Pioner</div>
<div class="lb thb" style="left:276px;top:367px;">Sem Molestie Sodales School</div>
<div class="lb thb" style="left:468px;top:367px;letter-spacing:0.2px;">000-020-2159</div>
<div class="lb thb" style="left:575px;top:367px;letter-spacing:0.2px;">000-020-2159</div>
<div class="lb thb" style="left:669px;top:367px;letter-spacing:0.2px;">000-020-2159</div>
<div class="lb thb" style="left:773px;top:367px;">710 N Cable Rd</div>
<div class="lb thb" style="left:982px;top:367px;">Lima</div>
<div class="lb thb" style="left:135px;top:380px;">Clare James</div>
<div class="lb thb" style="left:276px;top:380px;">A Odio Semper Consulting</div>
<div class="lb thb" style="left:468px;top:380px;letter-spacing:0.2px;">000-020-2159</div>
<div class="lb thb" style="left:575px;top:380px;letter-spacing:0.2px;">000-020-2159</div>
<div class="lb thb" style="left:669px;top:380px;letter-spacing:0.2px;">000-020-2159</div>
<div class="lb thb" style="left:773px;top:380px;">5345 Madison Ave</div>
<div class="lb thb" style="left:982px;top:380px;">Sacramento</div>
<div class="lb thb" style="left:135px;top:393px;">Tamsin Graefe</div>
<div class="lb thb" style="left:276px;top:393px;">Lacinia&nbsp; Incorporated</div>
<div class="lb thb" style="left:468px;top:393px;letter-spacing:0.2px;">000-020-2164</div>
<div class="lb thb" style="left:575px;top:393px;letter-spacing:0.2px;">000-020-2164</div>
<div class="lb thb" style="left:669px;top:393px;letter-spacing:0.2px;">000-020-2164</div>
<div class="lb thb" style="left:773px;top:393px;">5108 W Gore Blvd</div>
<div class="lb thb" style="left:982px;top:393px;">Lawton</div>
<div class="lb thb" style="left:135px;top:406px;">John Gardner</div>
<div class="lb thb" style="left:276px;top:406px;">Orci Ut LLP School</div>
<div class="lb thb" style="left:468px;top:406px;letter-spacing:0.2px;">000-020-2166</div>
<div class="lb thb" style="left:575px;top:406px;letter-spacing:0.2px;">000-020-2166</div>
<div class="lb thb" style="left:669px;top:406px;letter-spacing:0.2px;">000-020-2166</div>
<div class="lb thb" style="left:773px;top:406px;">8 N Water St</div>
<div class="lb thb" style="left:982px;top:406px;">Nantucket</div>
<div class="lb thb" style="left:135px;top:419px;">Jack Black</div>
<div class="lb thb" style="left:276px;top:419px;">Cum Sociis Natoque Consulting</div>
<div class="lb thb" style="left:468px;top:419px;letter-spacing:0.2px;">000-020-2162</div>
<div class="lb thb" style="left:575px;top:419px;letter-spacing:0.2px;">000-020-2162</div>
<div class="lb thb" style="left:669px;top:419px;letter-spacing:0.2px;">000-020-2162</div>
<div class="lb thb" style="left:773px;top:419px;">1715 Saint Marys Ave</div>
<div class="lb thb" style="left:982px;top:419px;">Parkersburg</div>
<div class="lb thb" style="left:135px;top:432px;">Alexa Malcolm</div>
<div class="lb thb" style="left:276px;top:432px;">Euismod Associates</div>
<div class="lb thb" style="left:468px;top:432px;letter-spacing:0.2px;">000-020-2156</div>
<div class="lb thb" style="left:575px;top:432px;letter-spacing:0.2px;">000-020-2156</div>
<div class="lb thb" style="left:669px;top:432px;letter-spacing:0.2px;">000-020-2156</div>
<div class="lb thb" style="left:773px;top:432px;">5600 Sw 6th Ave</div>
<div class="lb thb" style="left:982px;top:432px;">Topeka</div>
<div class="lb thb" style="left:135px;top:445px;">Stuart Sweetland</div>
<div class="lb thb" style="left:276px;top:445px;">&nbsp;Hospital Incorporated</div>
<div class="lb thb" style="left:468px;top:445px;letter-spacing:0.2px;">000-020-2161</div>
<div class="lb thb" style="left:575px;top:445px;letter-spacing:0.2px;">000-020-2161</div>
<div class="lb thb" style="left:669px;top:445px;letter-spacing:0.2px;">000-020-2161</div>
<div class="lb thb" style="left:773px;top:445px;">60 Monroe Center St Nw</div>
<div class="lb thb" style="left:982px;top:445px;">Grand Rapids</div>
<div class="lb thb" style="left:135px;top:458px;">Portia White</div>
<div class="lb thb" style="left:276px;top:458px;">Paper House</div>
<div class="lb thb" style="left:468px;top:458px;letter-spacing:0.2px;">000-030-2520</div>
<div class="lb thb" style="left:575px;top:458px;letter-spacing:0.2px;">000-030-2521</div>
<div class="lb thb" style="left:669px;top:458px;letter-spacing:0.2px;">1-00-300-200</div>
<div class="lb thb" style="left:773px;top:458px;">3222 Winona Way</div>
<div class="lb thb" style="left:982px;top:458px;">North Highlands</div>
<div style="left:125px;top:549px;width:968px;height:16px;background-color:#ffffff;background-image:linear-gradient(45deg,#d4d0c8 25%,transparent 25%,transparent 75%,#d4d0c8 75%),linear-gradient(45deg,#d4d0c8 25%,transparent 25%,transparent 75%,#d4d0c8 75%);background-size:2px 2px;background-position:0 0,1px 1px;"></div>
<div style="left:125px;top:549px;width:16px;height:16px;background:#d4d0c8;border-top:1px solid #ffffff;border-left:1px solid #ffffff;border-right:1px solid #404040;border-bottom:1px solid #404040;"><svg width="14" height="14" style="left:0;top:0"><path d="M8.5 3 L8.5 11 L4.5 7 Z" fill="#000"/></svg></div>
<div style="left:141px;top:549px;width:570px;height:16px;background:#d4d0c8;border-top:1px solid #ffffff;border-left:1px solid #ffffff;border-right:1px solid #404040;border-bottom:1px solid #404040;"></div>
<div style="left:1077px;top:549px;width:16px;height:16px;background:#d4d0c8;border-top:1px solid #ffffff;border-left:1px solid #ffffff;border-right:1px solid #404040;border-bottom:1px solid #404040;"><svg width="14" height="14" style="left:0;top:0"><path d="M5.5 3 L5.5 11 L9.5 7 Z" fill="#000"/></svg></div>
<div style="left:951px;top:325px;width:119px;height:54px;background:#ffff80;border:1px solid #000;"></div>
<div style="left:952px;top:326px;width:117px;height:13px;border:1px dotted #000;"></div>
<div class="t th" style="left:960px;top:328px;font-size:10.5px;color:#101010;">Data1</div>
<div class="t th" style="left:960px;top:341px;font-size:10.5px;color:#101010;">Data2</div>
<div class="t th" style="left:960px;top:354px;font-size:10.5px;color:#101010;">Data3</div>
<div class="t th" style="left:960px;top:367px;font-size:10.5px;color:#101010;letter-spacing:-0.6px;">Example</div>
<div style="left:132px;top:572px;width:120px;height:24px;border:1px solid #40e8e8;"></div>
<div class="t th" style="left:134px;top:573px;width:120px;height:24px;font-size:10px;color:#0b3034;text-align:center;line-height:16px;">TOTAL SAVING</div>
<div style="left:260px;top:572px;width:96px;height:25px;background:#ffffff;border:1px solid #c0ffff;"></div>
<div class="t th" style="left:271px;top:577px;font-size:11.5px;color:#101010;font-family:'DejaVu Sans Condensed','DejaVu Sans',sans-serif;font-stretch:condensed;">10</div>
</body></html>
